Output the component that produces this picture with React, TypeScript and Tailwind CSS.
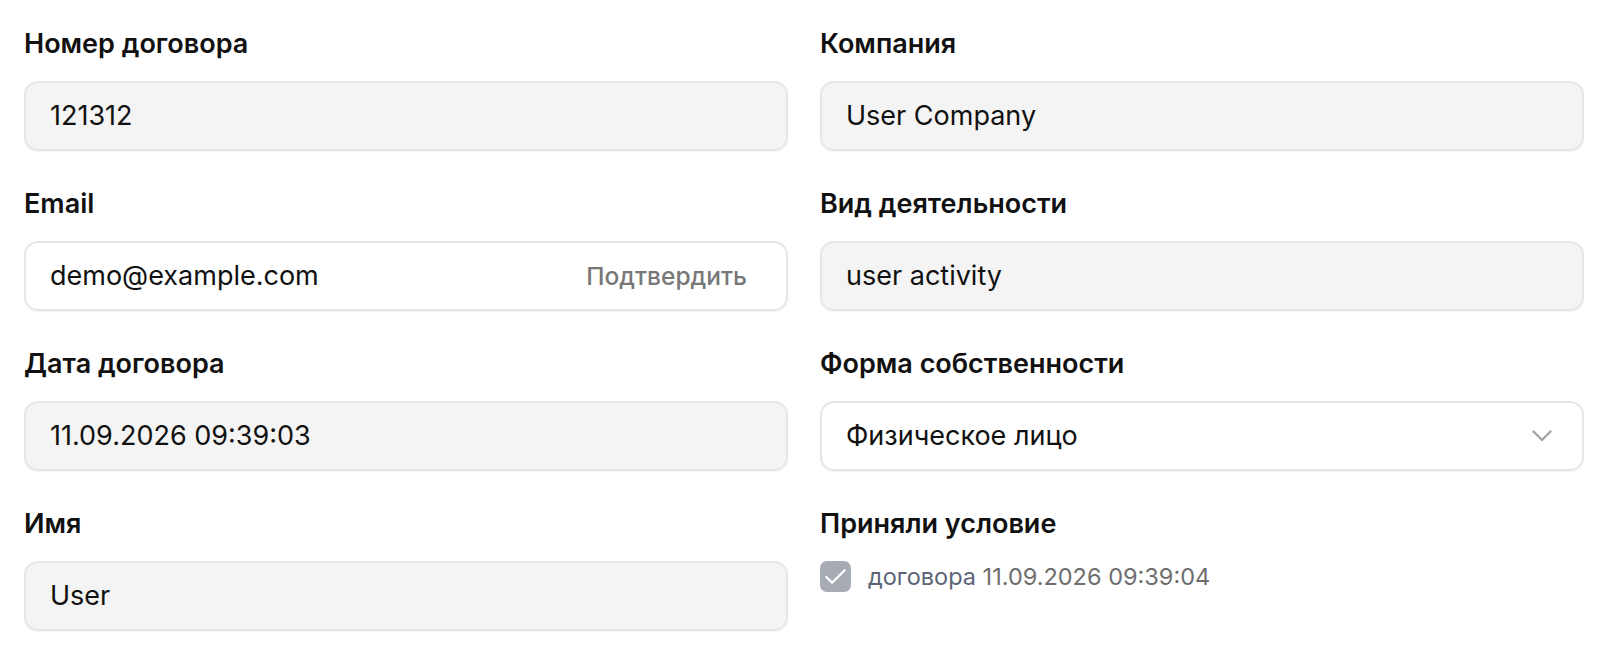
const font = { fontFamily: 'Inter, "Noto Sans", sans-serif' };

function Label({ children }: { children: React.ReactNode }) {
  return <div className="h-8 text-[27px] font-semibold leading-8 text-[#111]">{children}</div>;
}

function ReadOnly({ value }: { value: string }) {
  return (
    <div className="mt-[21px] flex h-[70px] items-center rounded-[14px] border-2 border-[#e6e6e6] bg-[#f4f4f4] px-6 text-[27px] text-[#111] shadow-[0_1px_2px_rgba(0,0,0,0.05)]">
      {value}
    </div>
  );
}

function Field({ label, value }: { label: string; value: string }) {
  return (
    <div>
      <Label>{label}</Label>
      <ReadOnly value={value} />
    </div>
  );
}

export default function App() {
  return (
    <div className="min-h-screen bg-white" style={font}>
      <div className="grid grid-cols-2 gap-x-8 gap-y-[37px] px-6 pt-[28px]">
        <Field label="Номер договора" value="121312" />
        <Field label="Компания" value="User Company" />

        <div>
          <Label>Email</Label>
          <div className="mt-[21px] flex h-[70px] items-center justify-between rounded-[14px] border-2 border-[#e6e6e6] bg-white pl-6 pr-[39px] shadow-[0_1px_2px_rgba(0,0,0,0.05)]">
            <span className="text-[27px] text-[#111]">demo@example.com</span>
            <button className="text-[24.5px] font-medium text-[#777]">Подтвердить</button>
          </div>
        </div>
        <Field label="Вид деятельности" value="user activity" />

        <Field label="Дата договора" value="11.09.2026 09:39:03" />
        <div>
          <Label>Форма собственности</Label>
          <div className="mt-[21px] flex h-[70px] items-center justify-between rounded-[14px] border-2 border-[#e6e6e6] bg-white pl-6 pr-[30px] shadow-[0_1px_2px_rgba(0,0,0,0.05)]">
            <span className="text-[27px] text-[#111]">Физическое лицо</span>
            <svg viewBox="0 0 20 12" className="h-3 w-5" fill="none" stroke="#a3a3a3" strokeWidth={2.4} strokeLinecap="round" strokeLinejoin="round">
              <path d="M1.5 1.5L10 10l8.5-8.5" />
            </svg>
          </div>
        </div>

        <Field label="Имя" value="User" />
        <div>
          <Label>Приняли условие</Label>
          <div className="mt-[19px] flex items-center gap-[17px]">
            <span className="flex h-[31px] w-[31px] items-center justify-center rounded-[7px] bg-[#a7abb3]">
              <svg viewBox="0 0 32 32" className="h-[31px] w-[31px]" fill="none" stroke="white" strokeWidth={2.4} strokeLinecap="round" strokeLinejoin="round">
                <path d="M6.5 16.5l6 6L25.5 9.5" />
              </svg>
            </span>
            <span className="text-[23.5px] text-[#5b6577]">
              договора <span className="text-[#6e6e6e]">11.09.2026 09:39:04</span>
            </span>
          </div>
        </div>
      </div>
    </div>
  );
}
